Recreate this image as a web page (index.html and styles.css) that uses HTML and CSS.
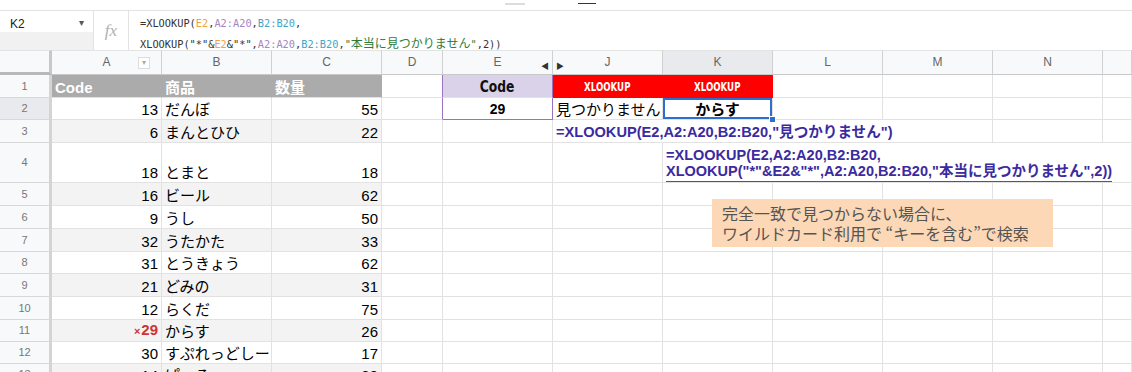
FILE: index.html
```html
<!DOCTYPE html>
<html lang="ja">
<head>
    <meta charset="UTF-8">
    <meta name="viewport" content="width=device-width, initial-scale=1.0">
    <title>XLOOKUP</title>
    <link rel="stylesheet" href="styles.css">
</head>
<body>
    <div class="topbar">
        <span class="mark light"></span>
        <span class="mark dark"></span>
    </div>
    <div class="formula-bar">
        <div class="namebox">
            <div class="name">K2<span class="caret">&#9662;</span></div>
            <div class="name-low"></div>
        </div>
        <div class="fx">fx</div>
        <div class="formula">
            <div>=XLOOKUP(<span class="f-e">E2</span>,<span class="f-a">A2:A20</span>,<span class="f-b">B2:B20</span>,</div>
            <div>XLOOKUP("*"&amp;<span class="f-e">E2</span>&amp;"*",<span class="f-a">A2:A20</span>,<span class="f-b">B2:B20</span>,<span class="f-s">"<span class="cjk">本当に見つかりません</span>"</span>,2))</div>
        </div>
    </div>

    <div class="sheet">
        <table class="grid">
            <colgroup>
                <col class="w-rh">
                <col class="w-c"><col class="w-c"><col class="w-c">
                <col class="w-d">
                <col class="w-c"><col class="w-c"><col class="w-c">
                <col class="w-c"><col class="w-c"><col class="w-c">
                <col class="w-o">
            </colgroup>
            <tr class="colhead">
                <td class="corner"></td>
                <td>A<span class="filter">&#9662;</span></td>
                <td>B</td>
                <td>C</td>
                <td>D</td>
                <td>E<span class="arrow-l">&#9664;</span></td>
                <td><span class="arrow-r">&#9654;</span>J</td>
                <td class="active">K</td>
                <td>L</td>
                <td>M</td>
                <td>N</td>
                <td></td>
            </tr>
            <tr class="r23">
                <td class="rh">1</td>
                <td class="th">Code</td>
                <td class="th">商品</td>
                <td class="th">数量</td>
                <td class="pre-e"></td>
                <td class="key-head"><span class="squeeze">Code</span></td>
                <td class="red-head"><span class="squeeze">XLOOKUP</span></td>
                <td class="red-head"><span class="squeeze">XLOOKUP</span></td>
                <td></td><td></td><td></td><td></td>
            </tr>
            <tr class="r22">
                <td class="rh active">2</td>
                <td class="num">13</td>
                <td>だんぼ</td>
                <td class="num">55</td>
                <td class="pre-e"></td>
                <td class="key">29</td>
                <td class="found">見つかりません</td>
                <td class="result">からす<span class="handle"></span></td>
                <td></td><td></td><td></td><td></td>
            </tr>
            <tr class="r23 band">
                <td class="rh">3</td>
                <td class="num">6</td>
                <td>まんとひひ</td>
                <td class="num">22</td>
                <td></td>
                <td class="plain"></td>
                <td class="note" colspan="4">=XLOOKUP(E2,A2:A20,B2:B20,"見つかりません")</td>
                <td class="plain"></td><td class="plain"></td>
            </tr>
            <tr class="r40">
                <td class="rh">4</td>
                <td class="num">18</td>
                <td>とまと</td>
                <td class="num">18</td>
                <td></td>
                <td></td>
                <td></td>
                <td class="note two" colspan="5">=XLOOKUP(E2,A2:A20,B2:B20,<br><span class="uline">XLOOKUP("*"&amp;E2&amp;"*",A2:A20,B2:B20,"本当に見つかりません",2))</span></td>
            </tr>
            <tr class="r23 band">
                <td class="rh">5</td>
                <td class="num">16</td><td>ビール</td><td class="num">62</td>
                <td></td><td></td><td></td><td></td><td></td><td></td><td></td><td></td>
            </tr>
            <tr class="r23">
                <td class="rh">6</td>
                <td class="num">9</td><td>うし</td><td class="num">50</td>
                <td></td><td></td><td></td><td></td><td></td><td></td><td></td><td></td>
            </tr>
            <tr class="r23 band">
                <td class="rh">7</td>
                <td class="num">32</td><td>うたかた</td><td class="num">33</td>
                <td></td><td></td><td></td><td></td><td></td><td></td><td></td><td></td>
            </tr>
            <tr class="r22">
                <td class="rh">8</td>
                <td class="num">31</td><td>とうきょう</td><td class="num">62</td>
                <td></td><td></td><td></td><td></td><td></td><td></td><td></td><td></td>
            </tr>
            <tr class="r23 band">
                <td class="rh">9</td>
                <td class="num">21</td><td>どみの</td><td class="num">31</td>
                <td></td><td></td><td></td><td></td><td></td><td></td><td></td><td></td>
            </tr>
            <tr class="r23">
                <td class="rh">10</td>
                <td class="num">12</td><td>らくだ</td><td class="num">75</td>
                <td></td><td></td><td></td><td></td><td></td><td></td><td></td><td></td>
            </tr>
            <tr class="r22 band">
                <td class="rh">11</td>
                <td class="num miss"><span class="x">&#215;</span>29</td><td>からす</td><td class="num">26</td>
                <td></td><td></td><td></td><td></td><td></td><td></td><td></td><td></td>
            </tr>
            <tr class="r22">
                <td class="rh">12</td>
                <td class="num">30</td><td class="clip">すぷれっどしーと</td><td class="num">17</td>
                <td></td><td></td><td></td><td></td><td></td><td></td><td></td><td></td>
            </tr>
            <tr class="r22 band">
                <td class="rh">13</td>
                <td class="num">14</td><td>ぱーる</td><td class="num">39</td>
                <td></td><td></td><td></td><td></td><td></td><td></td><td></td><td></td>
            </tr>
        </table>

        <div class="callout">
            完全一致で見つからない場合に、<br>
            ワイルドカード利用で “キーを含む”で検索
        </div>
    </div>
</body>
</html>
```

FILE: styles.css
```css
* {
    margin: 0;
    padding: 0;
    box-sizing: border-box;
}
body {
    background: #fff;
    font-family: "Liberation Sans", "Noto Sans CJK JP", sans-serif;
    color: #000;
    width: 1132px;
    height: 372px;
    overflow: hidden;
}

/* strip above the formula bar */
.topbar {
    height: 11px;
    border-bottom: 1px solid #e3e3e3;
    display: flex;
    align-items: flex-start;
    padding-top: 3px;
}
.mark {
    height: 1px;
    width: 20px;
}
.mark.light {
    background: #dcdcdc;
    margin-left: 505px;
    height: 2px;
}
.mark.dark {
    background: #333;
    margin-left: 53px;
    width: 18px;
}

/* formula bar */
.formula-bar {
    height: 39px;
    display: flex;
}
.namebox {
    width: 94px;
    border-right: 1px solid #e3e3e3;
    display: flex;
    flex-direction: column;
}
.name {
    height: 21px;
    padding: 6px 0 0 10px;
    font-size: 12px;
    color: #222;
    position: relative;
}
.caret {
    position: absolute;
    left: 79px;
    top: 6px;
    font-size: 10px;
    color: #555;
}
.name-low {
    flex: 1;
    background: #f1f1f1;
}
.fx {
    width: 35px;
    border-right: 1px solid #e3e3e3;
    font-family: "Liberation Serif", serif;
    font-style: italic;
    font-size: 17px;
    color: #b0b0b0;
    text-align: center;
    padding-top: 10px;
}
.formula {
    padding: 3px 0 0 11px;
    font-family: "DejaVu Sans Mono", monospace;
    font-size: 10.3px;
    line-height: 19px;
    color: #333;
    white-space: nowrap;
}
.formula .cjk {
    font-family: "Noto Sans CJK JP", sans-serif;
    font-size: 12px;
}
.f-e { color: #eba445; }
.f-a { color: #a784c4; }
.f-b { color: #3ea7c9; }
.f-s { color: #2d7b3a; }

/* sheet grid */
.sheet {
    position: relative;
}
.grid {
    width: 1132px;
    table-layout: fixed;
    border-collapse: separate;
    border-spacing: 0;
}
.w-rh { width: 52px; }
.w-c { width: 110px; }
.w-d { width: 61px; }
.w-o { width: 29px; }

.grid td {
    border-right: 1px solid #e2e2e2;
    border-bottom: 1px solid #e2e2e2;
    padding: 0 3px 1px;
    font-size: 15px;
    line-height: 17px;
    vertical-align: bottom;
    white-space: nowrap;
    overflow: visible;
}
.r22 { height: 22px; }
.r23 { height: 23px; }
.r40 { height: 40px; }

.colhead {
    height: 25px;
}
.colhead td {
    background: #f8f9fa;
    border-top: 1px solid #e3e3e3;
    border-right-color: #d0d0d0;
    border-bottom-color: #c8c8c8;
    text-align: center;
    vertical-align: middle;
    padding: 0;
    font-size: 12px;
    color: #666;
    position: relative;
}
.colhead td.active {
    background: #e8eaed;
}
.colhead td.corner {
    border-right: 3px solid #c8c8c8;
    border-bottom: 3px solid #b8b8b8;
}
.filter {
    position: absolute;
    right: 11px;
    top: 6px;
    width: 12px;
    height: 12px;
    border: 1px solid #ddd;
    background: #fff;
    font-size: 8px;
    line-height: 10px;
    color: #aaa;
}
.arrow-l, .arrow-r {
    position: absolute;
    top: 7px;
    font-size: 8px;
    color: #333;
}
.arrow-l { right: 3px; }
.arrow-r { left: 3px; }

.grid td.rh {
    background: #f8f9fa;
    border-right: 3px solid #d4d4d4;
    border-bottom-color: #d8d8d8;
    text-align: center;
    vertical-align: middle;
    padding: 0;
    font-size: 11px;
    color: #777;
}
.grid td.rh.active {
    background: #e8eaed;
}

.band td {
    background: #f3f3f3;
}
.band td:nth-child(n+5), .band td.plain, .band td.note {
    background: #fff;
}

.grid td.th {
    background: #ababab;
    border-right-color: #ababab;
    color: #fff;
    font-weight: bold;
}
.num {
    text-align: right;
}
.miss {
    color: #cc3333;
    font-weight: bold;
}
.miss .x {
    font-size: 11px;
    margin-right: 1px;
}
.grid td.clip {
    overflow: hidden;
    text-overflow: clip;
}

/* lookup area */
.squeeze {
    display: inline-block;
    transform: scaleX(0.82);
}
.grid td.pre-e {
    border-right-color: #9b72bf;
}
.grid td.key-head {
    background: #d9d2e9;
    border-right-color: #9b72bf;
    text-align: center;
    font-family: "DejaVu Sans", sans-serif;
    font-weight: bold;
    font-size: 15px;
    color: #111;
}
.grid td.key {
    border-right-color: #9b72bf;
    border-bottom-color: #9b72bf;
    text-align: center;
    font-weight: bold;
    font-size: 14px;
}
.grid td.red-head {
    background: #ff0000;
    border-right-color: #ff0000;
    border-bottom-color: #ff0000;
    text-align: center;
    font-family: "DejaVu Sans", sans-serif;
    font-weight: bold;
    font-size: 12px;
    color: #fff;
}
.red-head .squeeze {
    transform: scaleX(0.72);
}
.found {
    font-size: 15px;
}
.grid td.result {
    position: relative;
    text-align: center;
    font-weight: bold;
    font-size: 15px;
    box-shadow: inset 0 0 0 2px #2c6fd1;
}
.handle {
    position: absolute;
    right: -4px;
    bottom: -4px;
    width: 7px;
    height: 7px;
    background: #2c6fd1;
    border: 1px solid #fff;
}
.grid td.note {
    color: #3b2aa0;
    font-weight: bold;
    font-size: 14.6px;
}
.grid td.note.two {
    font-size: 14.5px;
    line-height: 16px;
    padding-bottom: 0;
}
.uline {
    display: inline-block;
    border-bottom: 1px solid #e02020;
    padding-bottom: 2px;
}

/* note box over the grid */
.callout {
    position: absolute;
    left: 712px;
    top: 149px;
    width: 341px;
    height: 48px;
    background: #fdd8b6;
    padding: 4px 0 0 10px;
    font-family: "Noto Sans CJK JP", sans-serif;
    font-size: 16px;
    line-height: 20px;
    color: #555;
}
```
